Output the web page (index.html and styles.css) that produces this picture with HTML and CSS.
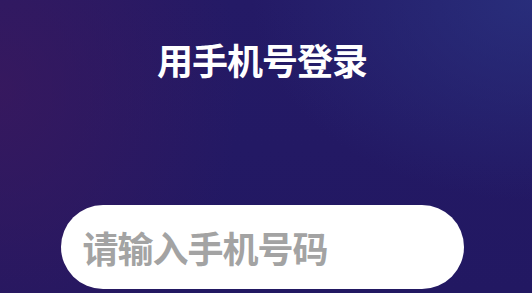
FILE: index.html
```html
<!DOCTYPE html>
<html lang="zh-CN">
<head>
<meta charset="utf-8">
<link rel="stylesheet" href="styles.css">
</head>
<body>
<main class="screen">
  <h1 class="title">用手机号登录</h1>
  <div class="field">
    <input class="phone" type="tel" placeholder="请输入手机号码">
  </div>
</main>
</body>
</html>
```
FILE: styles.css
```css
html, body {
  margin: 0;
  padding: 0;
}
body {
  width: 532px;
  height: 293px;
  overflow: hidden;
  font-family: "Noto Sans CJK SC", "Noto Sans", sans-serif;
  background:
    radial-gradient(ellipse 240px 300px at 0px 90px, rgba(62, 24, 92, 0.7), rgba(62, 24, 92, 0) 100%),
    radial-gradient(ellipse 280px 200px at 532px 0px, rgba(42, 52, 130, 0.75), rgba(42, 52, 130, 0) 100%),
    linear-gradient(180deg, #241a66 0%, #221862 100%);
}
.screen {
  display: flex;
  flex-direction: column;
  align-items: center;
  padding-top: 41px;
}
.title {
  margin: 0;
  font-size: 36px;
  line-height: 36px;
  font-weight: 700;
  color: #ffffff;
  letter-spacing: -1px;
  transform: translateX(-4px);
}
.field {
  margin-top: 128px;
  width: 403px;
  height: 84px;
  margin-left: -8px;
  background: #ffffff;
  border-radius: 42px;
  display: flex;
  align-items: center;
}
.phone {
  width: 100%;
  border: 0;
  outline: none;
  background: transparent;
  padding: 0 0 0 22px;
  font-family: "Noto Sans CJK SC", "Noto Sans", sans-serif;
  font-size: 36px;
  font-weight: 700;
  color: #333;
  letter-spacing: -1px;
}
.phone::placeholder {
  color: #a3a3a3;
}
```
